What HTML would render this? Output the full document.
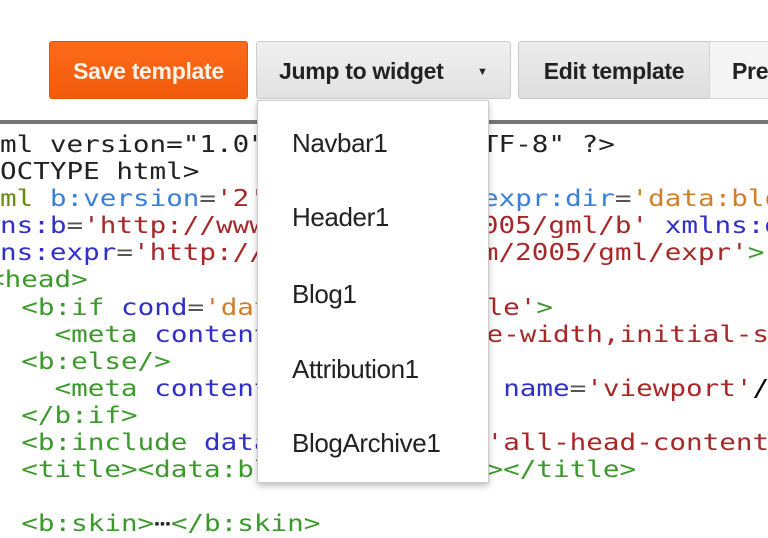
<!DOCTYPE html>
<html><head><style>
body{margin:0;width:768px;height:538px;overflow:hidden;background:#fff;position:relative;font-family:"Liberation Sans",Arial,sans-serif}
.btn{position:absolute;top:41px;height:58px;border-radius:3px;font-weight:bold;font-size:23px;line-height:58px;text-align:center;box-sizing:border-box;letter-spacing:-0.3px;overflow:hidden;white-space:nowrap}
#code{position:absolute;left:0;top:132px;width:640px;height:406px;overflow:hidden;font-family:"DejaVu Sans Mono","Liberation Mono",monospace;font-size:23px;line-height:27.1px;transform:scaleX(1.2);transform-origin:0 0}
#code div{height:27.1px;white-space:pre}
.t{color:#3c9a2c}.a{color:#3030c8}.b{color:#3a80d8}.v{color:#a82828}.o{color:#d0802c}.k{color:#222}.e{color:#555}
#dd{position:absolute;left:257px;top:100px;width:230px;height:381px;background:#fff;border:1px solid #ccc;box-shadow:0 3px 6px rgba(0,0,0,.25)}
#dd div{position:absolute;left:34px;font-size:26px;color:#222;letter-spacing:-0.4px}
</style></head><body>
<div class="btn" style="left:49px;width:199px;background:linear-gradient(#fb6b1a,#f25a0c);border:1px solid #e0550a;color:#fff3e8">Save template</div>
<div class="btn" style="left:256px;width:255px;background:linear-gradient(#f0f0f0,#e2e2e2);border:1px solid #ccc;color:#222;text-align:left;padding-left:22px">Jump to widget<span style="font-size:11px;position:absolute;left:220px;top:1px">▼</span></div>
<div class="btn" style="left:518px;width:192px;background:linear-gradient(#ececec,#dedede);border:1px solid #c8c8c8;color:#222">Edit template</div>
<div class="btn" style="left:709px;width:59px;background:#f4f4f4;border:1px solid #d4d4d4;border-right:0;color:#222;text-align:left;padding-left:22px;border-radius:0">Preview</div>
<div style="position:absolute;left:0;top:120px;width:768px;height:4px;background:#777"></div>
<div id="code"><div class="k">ml version="1.0" encoding= "UTF-8" ?&gt;</div><div class="k">OCTYPE html&gt;</div><div><span class="t" style="color:#6a8a10">ml</span> <span class="b">b:version</span><span class="e">=</span><span class="v">'2'</span> <span class="b">class</span>=<span class="o">'v2'</span>  <span class="b">expr:dir</span><span class="e">=</span><span class="o">'data:blog.languageDirection'</span></div><div><span class="a">ns:b</span><span class="e">=</span><span class="v">'http://www.google.com/2005/gml/b'</span> <span class="a">xmlns:data</span></div><div><span class="a">ns:expr</span><span class="e">=</span><span class="v">'http://www.google.com/2005/gml/expr'</span><span class="t">&gt;</span></div><div class="t" style="margin-left:-10px">&lt;head&gt;</div><div style="margin-left:-10px">  <span class="t">&lt;b:if</span> <span class="a">cond</span><span class="e">=</span><span class="o">'data:blog.isMobi</span><span class="v">le'</span><span class="t">&gt;</span></div><div style="margin-left:-10px">    <span class="t">&lt;meta</span> <span class="a">content</span>=<span class="v">'width=device-width,initial-scale=1.0'</span></div><div style="margin-left:-10px">  <span class="t">&lt;b:else/&gt;</span></div><div style="margin-left:-10px">    <span class="t">&lt;meta</span> <span class="a">content</span>=<span class="v">'width=1100'</span> <span class="a">name</span><span class="e">=</span><span class="v">'viewport'</span>/&gt;</div><div style="margin-left:-10px">  <span class="t">&lt;/b:if&gt;</span></div><div style="margin-left:-10px">  <span class="t">&lt;b:include</span> <span class="a">data</span>=<span class="o">'blog'</span> <span class="a">name</span>=<span class="v">'all-head-content'/&gt;</span></div><div style="margin-left:-10px">  <span class="t">&lt;title&gt;&lt;data:blog.pageTitle/</span><span class="t">&gt;</span><span class="t">&lt;/title&gt;</span></div><div> </div><div style="margin-left:-10px">  <span class="t">&lt;b:skin&gt;</span><span class="k">⋯</span><span class="t">&lt;/b:skin&gt;</span></div></div>
<div id="dd">
<div style="top:27px">Navbar1</div>
<div style="top:101px">Header1</div>
<div style="top:178px">Blog1</div>
<div style="top:253px">Attribution1</div>
<div style="top:327px">BlogArchive1</div>
</div>
</body></html>
